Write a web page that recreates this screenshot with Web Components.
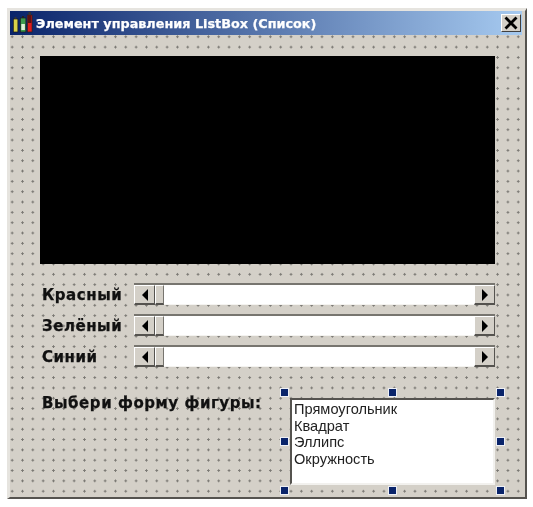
<!DOCTYPE html>
<html>
<head>
<meta charset="utf-8">
<title>ListBox</title>
<style>
  html, body { margin: 0; background: #fff; }
  body { padding: 8px 0 0 7px; font-family: "DejaVu Sans", sans-serif; }
</style>
</head>
<body>
<dialog-window caption="Элемент управления ListBox (Список)">
  <div slot="preview" style="height:208px;background:#000"></div>
  <color-row label="Красный"></color-row>
  <color-row label="Зелёный"></color-row>
  <color-row label="Синий"></color-row>
  <shape-picker label="Выбери форму фигуры:">
    <div>Прямоугольник</div>
    <div>Квадрат</div>
    <div>Эллипс</div>
    <div>Окружность</div>
  </shape-picker>
</dialog-window>
<script>
class DialogWindow extends HTMLElement {
    constructor() {
        super();
        this.attachShadow({ mode: 'open' });
    }

    connectedCallback() {
        this.shadowRoot.innerHTML = `
            <style>
                :host {
                    display: block;
                    box-sizing: border-box;
                    width: 520px;
                    height: 491px;
                    padding: 0 3px 3px 0;
                    background: #d4d0c8;
                    border-style: solid;
                    border-width: 3px 2px 2px 3px;
                    border-color: #e6e4df #55534f #55534f #e6e4df;
                    filter: blur(0.45px);
                }
                .title {
                    display: flex;
                    align-items: center;
                    height: 24px;
                    background: linear-gradient(90deg, #0a246a, #a6caf0);
                    color: #fff;
                    font: bold 12.8px "DejaVu Sans", sans-serif;
                    -webkit-text-stroke: 0.25px #fff;
                }
                .title > svg { margin: 0 0 0 1px; flex: none; }
                .title span { flex: 1; white-space: nowrap; }
                .close {
                    box-sizing: border-box;
                    display: flex;
                    width: 20px;
                    height: 18px;
                    margin-right: 1px;
                    background: #d4d0c8;
                    border: 1px solid;
                    border-color: #fff #404040 #404040 #fff;
                }
                .canvas {
                    box-sizing: border-box;
                    height: 459px;
                    padding: 21px 27px 0 30px;
                    background-color: #d4d0c8;
                    background-image: radial-gradient(circle, #7a7873 0, #7a7873 1px, transparent 1.3px);
                    background-size: 10.33px 10.33px;
                    background-position: -3px -3.4px;
                }
                ::slotted([slot=preview]) { margin-bottom: 19px; }
            </style>
            <div class="title">
                <svg width="25" height="24" viewBox="0 0 25 24">
                    <rect x="2.3" y="8" width="4.6" height="13" fill="#d9d24a" stroke="#1a1a1a" stroke-width=".7"/>
                    <rect x="3.5" y="6" width="2" height="2" fill="#333"/>
                    <rect x="9.3" y="7" width="5.6" height="14" fill="#3d9a4d" stroke="#1a1a1a" stroke-width=".7"/>
                    <rect x="10.3" y="13" width="3.6" height="6" fill="#dff0d8"/>
                    <rect x="11" y="5" width="2" height="2" fill="#222"/>
                    <rect x="16.3" y="4" width="4.8" height="17" fill="#e01b1b" stroke="#222" stroke-width=".7"/>
                    <rect x="17" y="4" width="3.4" height="8" fill="#5a1212"/>
                    <rect x="17.5" y="1" width="2.4" height="3" fill="#333"/>
                </svg>
                <span>${this.getAttribute('caption')}</span>
                <div class="close">
                    <svg width="18" height="16" viewBox="0 0 18 16">
                        <path d="M3.5 2.5 L14.5 13.5 M14.5 2.5 L3.5 13.5" stroke="#000" stroke-width="2.8" fill="none"/>
                    </svg>
                </div>
            </div>
            <div class="canvas">
                <slot name="preview"></slot>
                <slot></slot>
            </div>
        `;
    }
}

class ColorRow extends HTMLElement {
    constructor() {
        super();
        this.attachShadow({ mode: 'open' });
    }

    connectedCallback() {
        this.shadowRoot.innerHTML = `
            <style>
                :host {
                    display: flex;
                    align-items: center;
                    height: 22px;
                    margin-bottom: 9px;
                    font: bold 15px "DejaVu Sans", sans-serif;
                    letter-spacing: 0.55px;
                    -webkit-text-stroke: 0.25px #111;
                    color: #111;
                }
                .label { width: 92px; padding: 1px 0 0 2px; white-space: nowrap; }
                .bar {
                    flex: 1;
                    display: flex;
                    height: 22px;
                    border-top: 2px solid #77756f;
                    box-sizing: border-box;
                    background: #fff;
                }
                .btn {
                    box-sizing: border-box;
                    flex: none;
                    width: 21px;
                    height: 20px;
                    display: flex;
                    align-items: center;
                    justify-content: center;
                    background: #d4d0c8;
                    border-style: solid;
                    border-width: 1px 1px 2px 1px;
                    border-color: #fff #55534f #55534f #fff;
                }
                .thumb {
                    box-sizing: border-box;
                    flex: none;
                    width: 9px;
                    height: 20px;
                    background: #d4d0c8;
                    border-style: solid;
                    border-width: 1px 1px 2px 1px;
                    border-color: #fff #77756f #55534f #fff;
                }
                .track { flex: 1; border-bottom: 1px solid #f4f3f0; }
                .arrow { width: 0; height: 0; border-style: solid; border-color: transparent; }
                .left { border-width: 6px 6px 6px 0; border-right-color: #000; }
                .right { border-width: 6px 0 6px 6px; border-left-color: #000; }
            </style>
            <div class="label">${this.getAttribute('label')}</div>
            <div class="bar">
                <div class="btn"><div class="arrow left"></div></div>
                <div class="thumb"></div>
                <div class="track"></div>
                <div class="btn"><div class="arrow right"></div></div>
            </div>
        `;
    }
}

class ShapePicker extends HTMLElement {
    constructor() {
        super();
        this.attachShadow({ mode: 'open' });
    }

    connectedCallback() {
        const spots = [
            [-12, -12], [96, -12], [204, -12],
            [-12, 37], [204, 37],
            [-12, 86], [96, 86], [204, 86]
        ];
        const handles = spots.map(p => `<i style="left:${p[0]}px;top:${p[1]}px"></i>`).join('');
        this.shadowRoot.innerHTML = `
            <style>
                :host {
                    display: flex;
                    margin-top: 31px;
                    font: bold 15px "DejaVu Sans", sans-serif;
                    letter-spacing: 0.55px;
                    -webkit-text-stroke: 0.25px #111;
                    color: #111;
                }
                .label { width: 248px; padding: 0 0 0 2px; height: 87px; line-height: 10px; white-space: nowrap; }
                .list {
                    position: relative;
                    box-sizing: border-box;
                    width: 205px;
                    height: 87px;
                    padding: 1px 0 0 2px;
                    background: #fff;
                    border-style: solid;
                    border-width: 2px;
                    border-color: #55534f #f2f1ee #f2f1ee #55534f;
                    font: 400 14.6px/16.7px "Liberation Sans", sans-serif;
                    letter-spacing: 0;
                    -webkit-text-stroke: 0;
                    color: #222;
                }
                i {
                    position: absolute;
                    box-sizing: content-box;
                    width: 7px;
                    height: 7px;
                    background: #0a246a;
                    border: 1px solid #eef0f5;
                }
            </style>
            <div class="label">${this.getAttribute('label')}</div>
            <div class="list"><slot></slot>${handles}</div>
        `;
    }
}

customElements.define('dialog-window', DialogWindow);
customElements.define('color-row', ColorRow);
customElements.define('shape-picker', ShapePicker);
</script>
</body>
</html>
